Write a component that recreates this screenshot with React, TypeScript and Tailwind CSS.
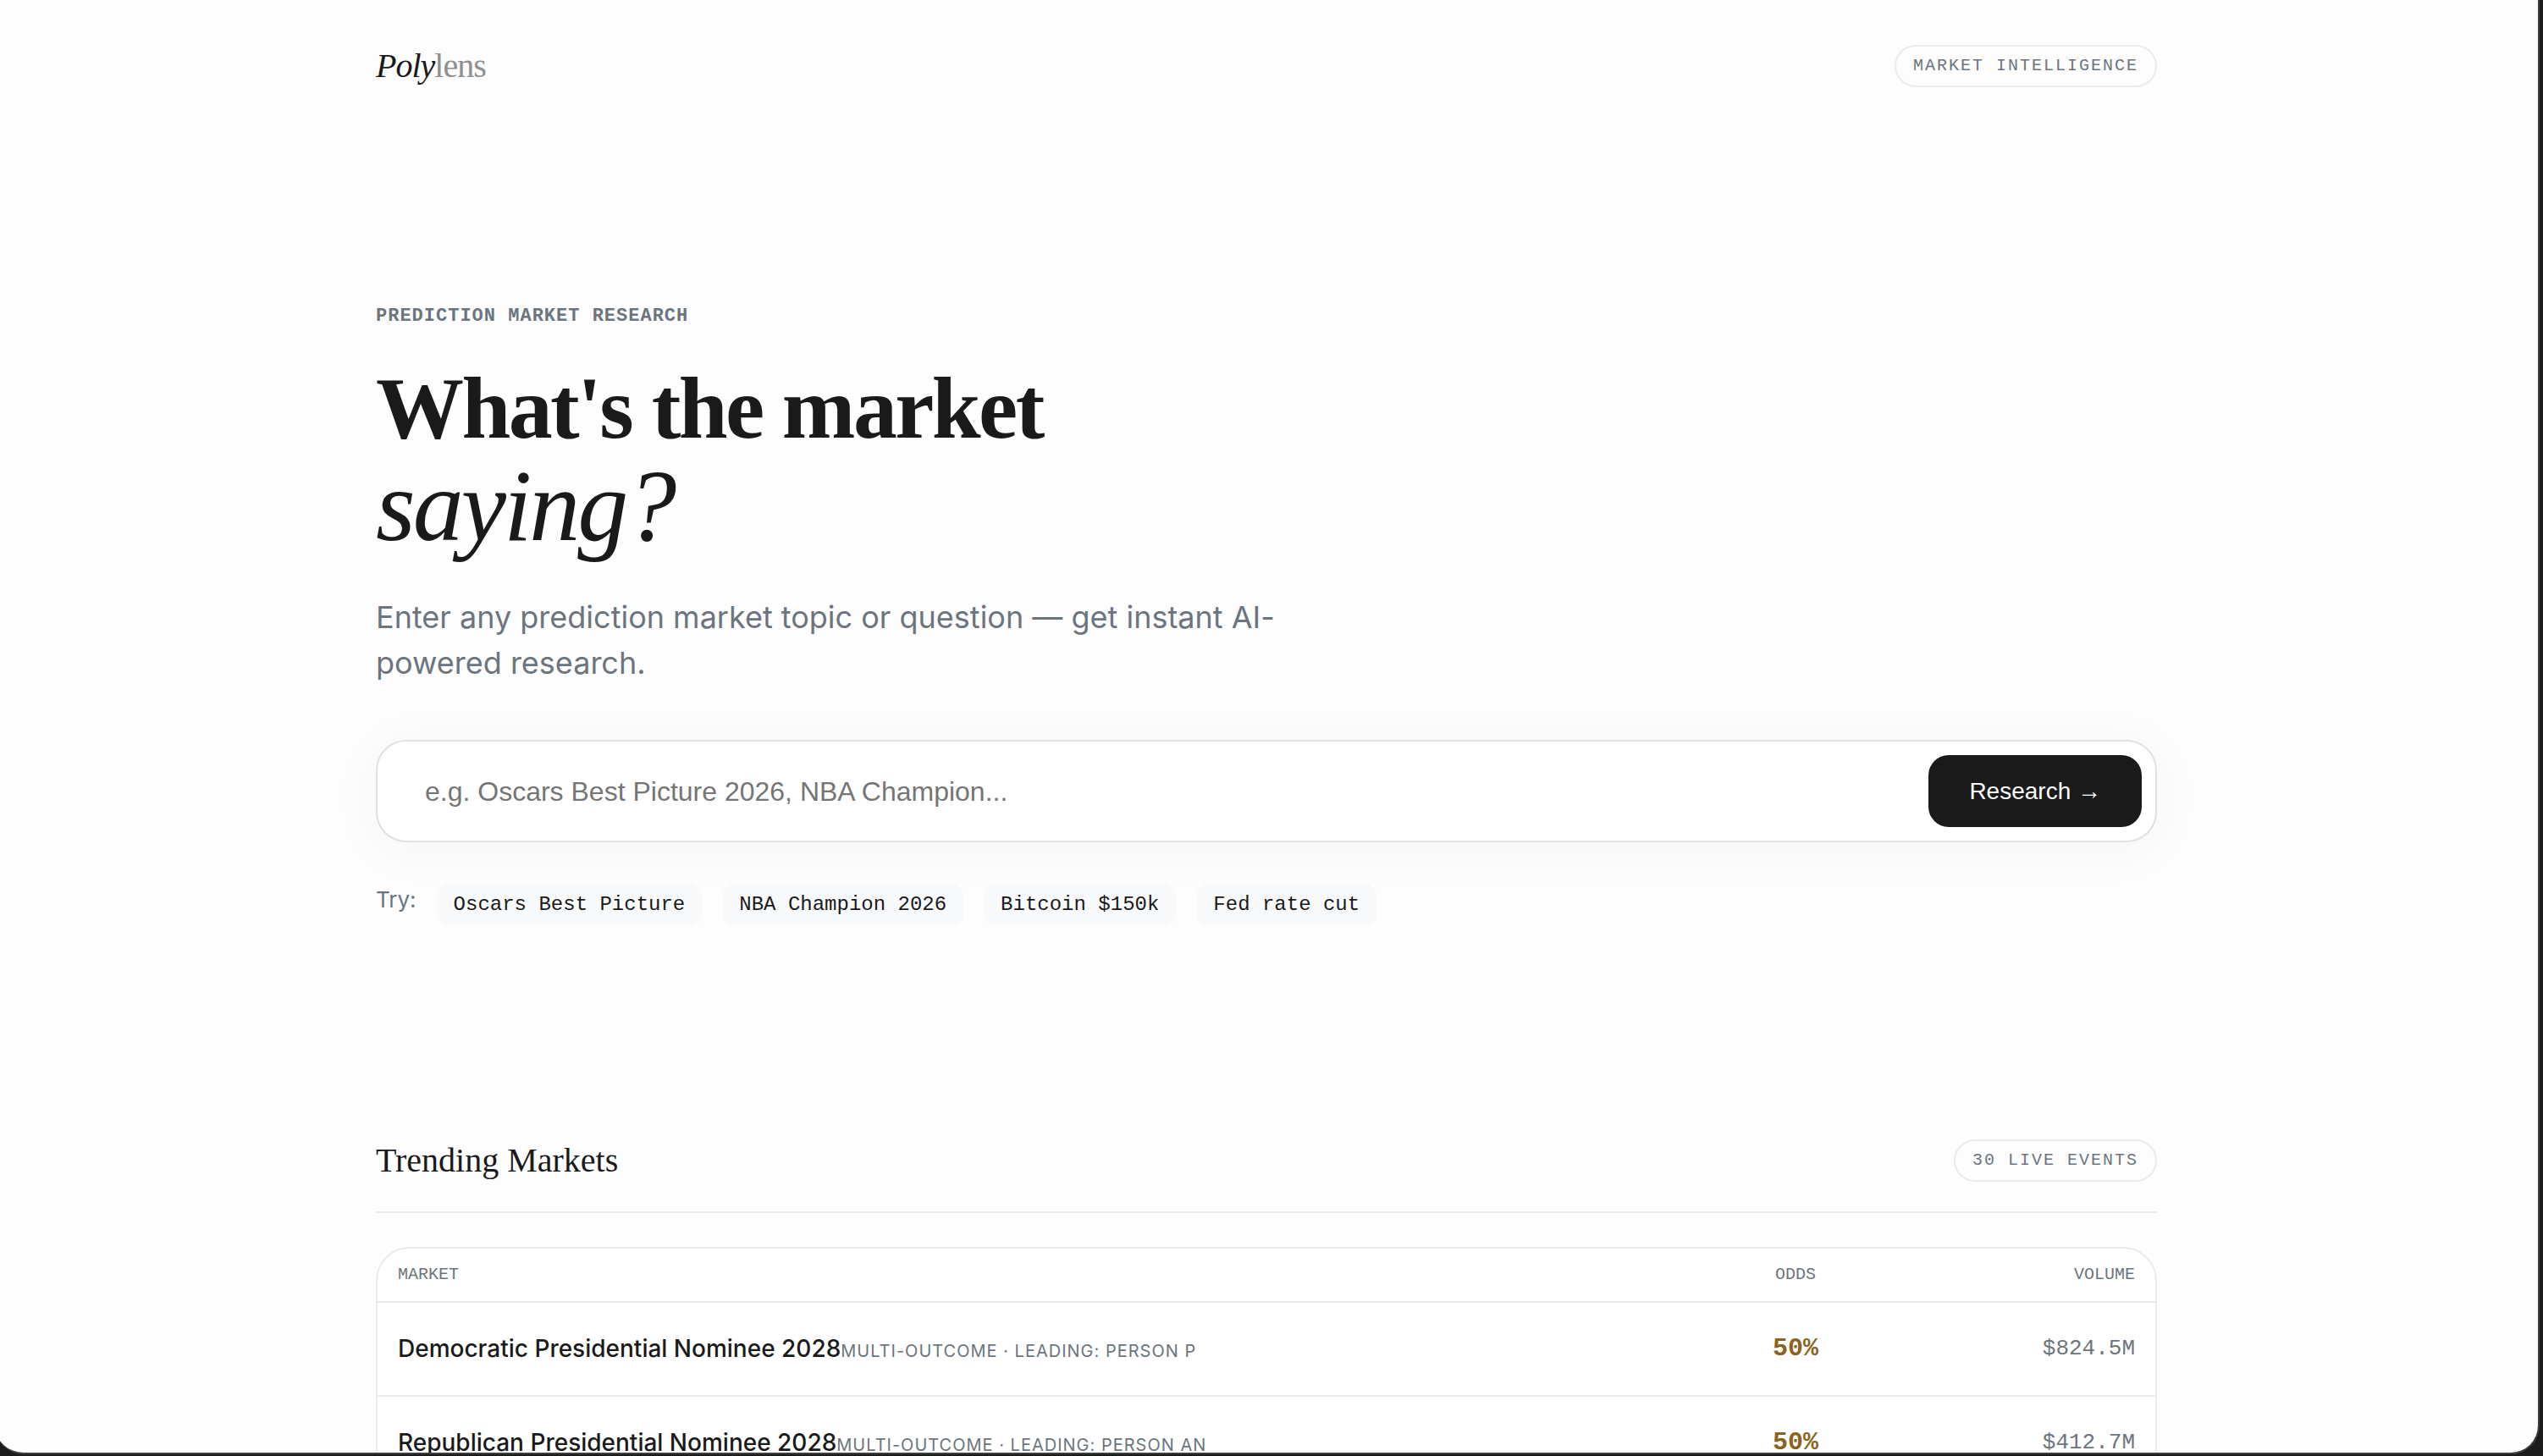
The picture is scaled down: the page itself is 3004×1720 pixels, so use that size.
import { useState } from "react";
import type { FormEvent, ReactNode } from "react";

const SUGGESTIONS = ["Oscars Best Picture", "NBA Champion 2026", "Bitcoin $150k", "Fed rate cut"];

const MARKETS = [
  {
    name: "Democratic Presidential Nominee 2028",
    detail: "MULTI-OUTCOME · LEADING: PERSON P",
    odds: "50%",
    volume: "$824.5M",
  },
  {
    name: "Republican Presidential Nominee 2028",
    detail: "MULTI-OUTCOME · LEADING: PERSON AN",
    odds: "50%",
    volume: "$412.7M",
  },
];

function Badge({ children }: { children: ReactNode }) {
  return (
    <span className="rounded-full border-2 border-[#ebebef] px-5 py-2 font-['Liberation_Mono',monospace] text-[20px] leading-[30px] tracking-[2px] text-[#6c757d] whitespace-nowrap">
      {children}
    </span>
  );
}

function Header() {
  return (
    <header className="flex items-center justify-between pt-13 pb-11">
      <a
        href="#"
        className="font-['Liberation_Serif',serif] text-[40px] leading-[52px] tracking-tight text-[#1a1a1a]"
      >
        <em>Poly</em>
        <span className="text-[#8f8f8f]">lens</span>
      </a>
      <Badge>MARKET INTELLIGENCE</Badge>
    </header>
  );
}

function Hero() {
  const [query, setQuery] = useState("");

  function onSubmit(e: FormEvent) {
    e.preventDefault();
  }

  return (
    <section className="pt-[210px] pb-[120px]">
      <p className="font-['Liberation_Mono',monospace] text-[22px] leading-8 font-bold tracking-[1px] text-[#6c757d]">
        PREDICTION MARKET RESEARCH
      </p>
      <h1 className="mt-9 font-['Liberation_Serif',serif] text-[#1a1a1a]">
        <span className="block text-[104px] leading-[112px] font-bold tracking-tight">What's the market</span>
        <em className="block text-[120px] leading-[120px] font-normal tracking-tight">saying?</em>
      </h1>
      <p className="mt-11 max-w-[1120px] text-[36px] leading-[54px] text-[#6c757d]">
        Enter any prediction market topic or question — get instant AI-powered research.
      </p>

      <form
        onSubmit={onSubmit}
        className="mt-16 flex items-center rounded-[36px] border-2 border-[#dee2e6] bg-white p-4 shadow-[0_8px_64px_rgba(0,0,0,0.04)]"
      >
        <input
          type="text"
          aria-label="Market topic or question"
          value={query}
          onChange={(e) => setQuery(e.target.value)}
          placeholder="e.g. Oscars Best Picture 2026, NBA Champion..."
          className="min-w-0 flex-1 bg-transparent px-10 font-['Liberation_Sans',sans-serif] text-[32px] text-[#1a1a1a] outline-none placeholder:text-[#757575]"
        />
        <button
          type="submit"
          className="h-[85px] rounded-3xl bg-[#1a1a1a] px-12 font-['Liberation_Sans',sans-serif] text-[28px] text-white"
        >
          Research →
        </button>
      </form>

      <div className="mt-12 flex flex-wrap gap-6">
        <span className="text-[26px] leading-10 text-[#6c757d]">Try:</span>
        {SUGGESTIONS.map((s) => (
          <button
            key={s}
            type="button"
            onClick={() => setQuery(s)}
            className="rounded-2xl bg-[#f8f9fb] px-5 py-2 font-['Liberation_Mono',monospace] text-[24px] leading-9 text-[#1a1a1a]"
          >
            {s}
          </button>
        ))}
      </div>
    </section>
  );
}

function TrendingMarkets() {
  return (
    <section className="pt-32 pb-24">
      <div className="flex items-center justify-between border-b-2 border-[#ebebef] pb-8">
        <h2 className="font-['Liberation_Serif',serif] text-[40px] leading-[56px] text-[#1a1a1a]">
          Trending Markets
        </h2>
        <Badge>30 LIVE EVENTS</Badge>
      </div>

      <div className="mt-10 overflow-hidden rounded-[40px] border-2 border-[#ebebef] bg-white">
        <table className="w-full table-fixed border-separate border-spacing-0">
          <thead className="font-['Liberation_Mono',monospace] text-[20px] leading-[30px] text-[#6c757d]">
            <tr>
              <th className="border-b-2 border-[#ebebef] px-6 py-4 text-left font-normal">MARKET</th>
              <th className="w-[250px] border-b-2 border-[#ebebef] px-6 py-4 text-center font-normal">ODDS</th>
              <th className="w-[300px] border-b-2 border-[#ebebef] px-6 py-4 text-right font-normal">VOLUME</th>
            </tr>
          </thead>
          <tbody>
            {MARKETS.map((m) => (
              <tr key={m.name}>
                <td className="border-b-2 border-[#ebebef] px-6 py-8 text-[28px] leading-[45px]">
                  <span className="font-medium text-[#1a1a1a]">{m.name}</span>
                  <span className="text-[20px] leading-none tracking-[1px] text-[#6c757d]">{m.detail}</span>
                </td>
                <td className="border-b-2 border-[#ebebef] px-6 py-8 text-center font-['Liberation_Mono',monospace] text-[30px] leading-[45px] font-bold text-[#8b6320]">
                  {m.odds}
                </td>
                <td className="border-b-2 border-[#ebebef] px-6 py-8 text-right font-['Liberation_Mono',monospace] text-[26px] leading-[45px] text-[#6c757d]">
                  {m.volume}
                </td>
              </tr>
            ))}
          </tbody>
        </table>
      </div>
    </section>
  );
}

export default function App() {
  return (
    <div className="h-screen overflow-hidden bg-[#1b1c1b] font-['Inter',sans-serif]">
      {/* Browser window edge */}
      <div className="mr-1 -ml-1.5 h-[calc(100vh-2px)] overflow-y-auto rounded-b-[34px] border-r-2 border-b-2 border-[#3c3e3d] bg-[#fdfdfd] [scrollbar-width:none]">
        <main className="mx-auto max-w-[2200px] px-12">
          <Header />
          <Hero />
          <TrendingMarkets />
        </main>
      </div>
    </div>
  );
}
